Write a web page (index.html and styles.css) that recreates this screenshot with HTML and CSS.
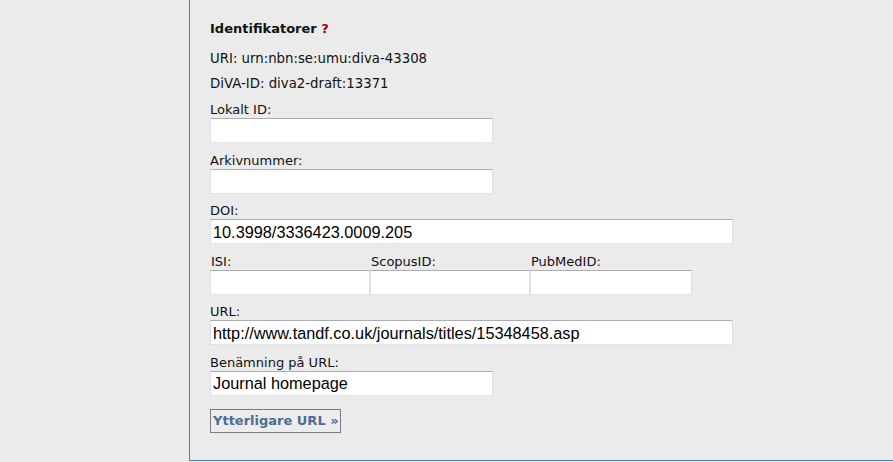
FILE: index.html
```html
<!DOCTYPE html>
<html>
<head>
<meta charset="utf-8">
<link rel="stylesheet" href="styles.css">
</head>
<body>
<div class="page">
  <div class="panel">
    <h3 class="heading">Identifikatorer <span class="help">?</span></h3>
    <p class="info">URI: urn:nbn:se:umu:diva-43308</p>
    <p class="info">DiVA-ID: diva2-draft:13371</p>
    <div class="field">
      <label class="label">Lokalt ID:</label>
      <input class="input short" type="text" value="">
    </div>
    <div class="field">
      <label class="label">Arkivnummer:</label>
      <input class="input short" type="text" value="">
    </div>
    <div class="field">
      <label class="label">DOI:</label>
      <input class="input long" type="text" value="10.3998/3336423.0009.205">
    </div>
    <div class="field triple">
      <div class="cell">
        <label class="label">ISI:</label>
        <input class="input third" type="text" value="">
      </div>
      <div class="cell">
        <label class="label">ScopusID:</label>
        <input class="input third" type="text" value="">
      </div>
      <div class="cell">
        <label class="label">PubMedID:</label>
        <input class="input third last" type="text" value="">
      </div>
    </div>
    <div class="field">
      <label class="label">URL:</label>
      <input class="input long" type="text" value="http://www.tandf.co.uk/journals/titles/15348458.asp">
    </div>
    <div class="field">
      <label class="label">Benämning på URL:</label>
      <input class="input short" type="text" value="Journal homepage">
    </div>
    <div class="actions">
      <button class="more" type="button">Ytterligare URL »</button>
    </div>
  </div>
</div>
</body>
</html>
```

FILE: styles.css
```css
html, body {
  margin: 0;
  padding: 0;
  background: #ebebeb;
}
body {
  font-family: "DejaVu Sans", Verdana, sans-serif;
  font-size: 13px;
  color: #111;
}
.page {
  width: 893px;
  height: 462px;
  overflow: hidden;
}
.panel {
  margin-left: 189px;
  height: 461px;
  box-sizing: border-box;
  border-left: 1px solid #5b7ba2;
  border-bottom: 1px solid #5b7ba2;
  padding: 21px 0 0 20px;
  display: flex;
  flex-direction: column;
}
.heading {
  margin: 0 0 14px 0;
  font-size: 13px;
  line-height: 16px;
  font-weight: bold;
  color: #111;
}
.help {
  color: #a30000;
}
.info {
  margin: 0 0 9px 0;
  line-height: 16px;
  font-size: 13.3px;
}
.field {
  display: flex;
  flex-direction: column;
  margin-bottom: 8.5px;
}
.label {
  display: block;
  line-height: 17px;
  margin-bottom: 0;
}
.input {
  box-sizing: border-box;
  height: 25px;
  margin: 0;
  padding: 1px 2px 0 2px;
  background: #fff;
  border: 1px solid #e1e5eb;
  border-top-color: #abadb3;
  border-left-color: #dbdfe6;
  border-right-color: #dbdfe6;
  font-family: "Liberation Sans", Arial, sans-serif;
  font-size: 16.3px;
  color: #000;
  outline: none;
}
.short { width: 283px; }
.long { width: 523px; }
.third { width: 160px; }
.third.last { width: 162px; }
.triple {
  flex-direction: row;
}
.cell {
  display: flex;
  flex-direction: column;
}
.cell .label {
  padding-left: 1px;
}
.actions {
  margin-top: 4.5px;
}
.more {
  box-sizing: border-box;
  height: 24px;
  width: 131px;
  margin: 0;
  padding: 0 0 0 2px;
  text-align: left;
  background: #ececec;
  border: 1px solid #7a7a80;
  font-family: "DejaVu Sans", Verdana, sans-serif;
  font-size: 13px;
  font-weight: bold;
  color: #4d6d93;
}
```
